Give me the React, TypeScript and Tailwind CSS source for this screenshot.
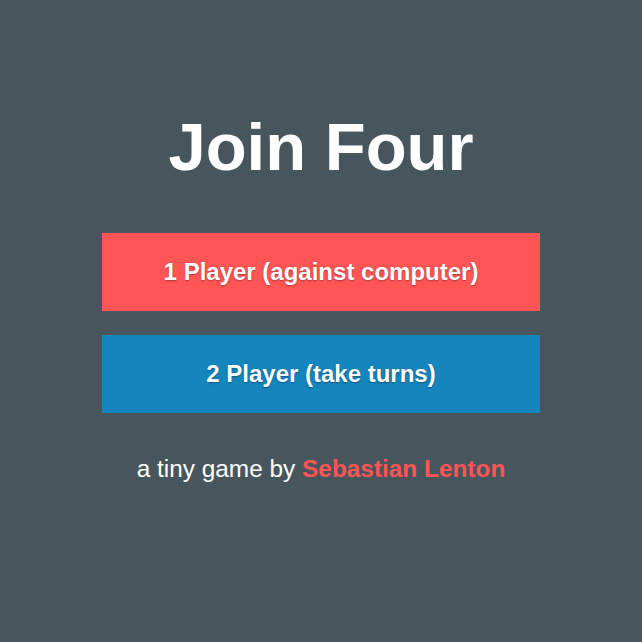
export default function App() {
  return (
    <div className="min-h-[642px] w-full bg-[#47565d] flex flex-col items-center pt-[113px] font-['Liberation_Sans',Arial,sans-serif] text-white">
      <h1 className="text-[67px] leading-[68px] font-bold">Join Four</h1>

      <div className="mt-[52px] w-[438px] flex flex-col gap-[24px]">
        <button className="h-[78px] w-full bg-[#ff5555] text-[24px] leading-[24px] font-bold [text-shadow:0_1px_2px_rgba(0,0,0,0.35)]">
          1 Player (against computer)
        </button>
        <button className="h-[78px] w-full bg-[#1585bd] text-[24px] leading-[24px] font-bold [text-shadow:0_1px_2px_rgba(0,0,0,0.35)]">
          2 Player (take turns)
        </button>
      </div>

      <p className="mt-[44px] text-[24.4px] leading-[24px]">
        a tiny game by <span className="font-bold text-[#ff5555]">Sebastian Lenton</span>
      </p>
    </div>
  );
}
